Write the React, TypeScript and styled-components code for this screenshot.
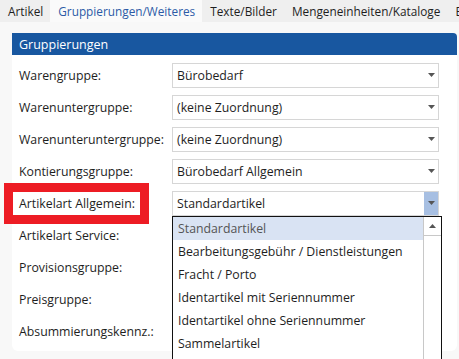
import React from 'react';
import styled, {createGlobalStyle} from 'styled-components';

const GlobalStyle = createGlobalStyle`
  body {
    margin: 0;
    font-family: "Open Sans", "Noto Sans", sans-serif;
  }
`

const tabs = ['Artikel', 'Gruppierungen/Weiteres', 'Texte/Bilder', 'Mengeneinheiten/Kataloge', 'Einkauf']

type RowType = {
    label: string
    value?: string
    highlighted?: boolean
    open?: boolean
}

const rows: RowType[] = [
    {label: 'Warengruppe:', value: 'Bürobedarf'},
    {label: 'Warenuntergruppe:', value: '(keine Zuordnung)'},
    {label: 'Warenunteruntergruppe:', value: '(keine Zuordnung)'},
    {label: 'Kontierungsgruppe:', value: 'Bürobedarf Allgemein'},
    {label: 'Artikelart Allgemein:', value: 'Standardartikel', highlighted: true, open: true},
    {label: 'Artikelart Service:'},
    {label: 'Provisionsgruppe:'},
    {label: 'Preisgruppe:'},
    {label: 'Absummierungskennz.:'},
]

const options = [
    'Standardartikel',
    'Bearbeitungsgebühr / Dienstleistungen',
    'Fracht / Porto',
    'Identartikel mit Seriennummer',
    'Identartikel ohne Seriennummer',
    'Sammelartikel',
    'Setartikel',
]

const Arrow = ({up}: { up?: boolean }) => (
    <svg width="7" height="4" viewBox="0 0 7 4">
        <path d={up ? 'M0 4 L3.5 0 L7 4 Z' : 'M0 0 L7 0 L3.5 4 Z'} fill="#555"/>
    </svg>
)

export default function App() {
    return (
        <Page>
            <GlobalStyle/>
            <TabBar>
                {tabs.map((t, i) => <Tab key={t} active={i === 1}>{t}</Tab>)}
            </TabBar>
            <Content>
                <Panel>
                    <Header>Gruppierungen</Header>
                    <Form>
                        {rows.map(r => (
                            <Row key={r.label}>
                                <Label highlighted={r.highlighted}>{r.label}</Label>
                                {r.value && (
                                    <SelectWrap>
                                        <Select>
                                            <SelectText>{r.value}</SelectText>
                                            <ArrowBox open={r.open}><Arrow/></ArrowBox>
                                        </Select>
                                        {r.open && (
                                            <DropList>
                                                <Items>
                                                    {options.map((o, i) => (
                                                        <Item key={o} selected={i === 0}>{o}</Item>
                                                    ))}
                                                </Items>
                                                <ScrollBar>
                                                    <ScrollButton><Arrow up/></ScrollButton>
                                                </ScrollBar>
                                            </DropList>
                                        )}
                                    </SelectWrap>
                                )}
                            </Row>
                        ))}
                    </Form>
                </Panel>
            </Content>
        </Page>
    );
}

const Page = styled.div`
  width: 459px;
  height: 359px;
  overflow: hidden;
  background: #f8f8f8;
  font-size: 12.3px;
  color: #1e1e1e;
`

const TabBar = styled.div`
  display: flex;
  height: 22px;
  background: #efefef;
  white-space: nowrap;
  font-size: 11.8px;
`

type TabProps = { active?: boolean }
const Tab = styled.div<TabProps>`
  display: flex;
  align-items: center;
  padding: 0 7px 0 8px;
  background: ${(p) => p.active ? '#fafafa' : 'transparent'};
  color: ${(p) => p.active ? '#2c5aa6' : '#1e1e1e'};
`

const Content = styled.div`
  padding: 11px 2px 0 12px;
`

const Panel = styled.div`
  background: #ffffff;
  height: 318px;
  border-radius: 0 4px 6px 6px;
`

const Header = styled.div`
  height: 22px;
  display: flex;
  align-items: center;
  padding-left: 7px;
  background: #1857a0;
  color: #ffffff;
  font-size: 12.5px;
  border-radius: 0 4px 0 0;
`

const Form = styled.div`
  padding-top: 4px;
`

const Row = styled.div`
  display: flex;
  align-items: center;
  height: 32px;
`

type LabelProps = { highlighted?: boolean }
const Label = styled.div<LabelProps>`
  box-sizing: border-box;
  width: 160px;
  flex-shrink: 0;
  padding-left: 7px;
  ${(p) => p.highlighted && `
    width: 127px;
    height: 23px;
    margin: 0 32px 0 1px;
    display: flex;
    align-items: center;
    padding-left: 6px;
    outline: 9px solid #ed1c24;
    background: #ffffff;
  `}
`

const SelectWrap = styled.div`
  position: relative;
`

const Select = styled.div`
  box-sizing: border-box;
  width: 267px;
  height: 25px;
  display: flex;
  align-items: center;
  border: 1px solid #d6d6d6;
  background: #ffffff;
`

const SelectText = styled.div`
  flex: 1;
  padding-left: 4px;
`

type ArrowBoxProps = { open?: boolean }
const ArrowBox = styled.div<ArrowBoxProps>`
  width: 14px;
  height: 100%;
  display: flex;
  align-items: center;
  justify-content: center;
  background: ${(p) => p.open ? '#a7bfe2' : 'transparent'};
`

const DropList = styled.div`
  position: absolute;
  left: 0;
  top: 25px;
  width: 270px;
  height: 160px;
  box-sizing: border-box;
  border: 1px solid #111111;
  background: #ffffff;
  display: flex;
  z-index: 2;
`

const Items = styled.div`
  flex: 1;
`

type ItemProps = { selected?: boolean }
const Item = styled.div<ItemProps>`
  height: 23px;
  display: flex;
  align-items: center;
  padding-left: 5px;
  background: ${(p) => p.selected ? '#d9e3f3' : 'transparent'};
  color: ${(p) => p.selected ? '#555555' : '#1e1e1e'};
`

const ScrollBar = styled.div`
  width: 17px;
  border-left: 1px solid #c8c8c8;
  background: #ffffff;
`

const ScrollButton = styled.div`
  height: 18px;
  display: flex;
  align-items: center;
  justify-content: center;
  border-bottom: 1px solid #c8c8c8;
`
